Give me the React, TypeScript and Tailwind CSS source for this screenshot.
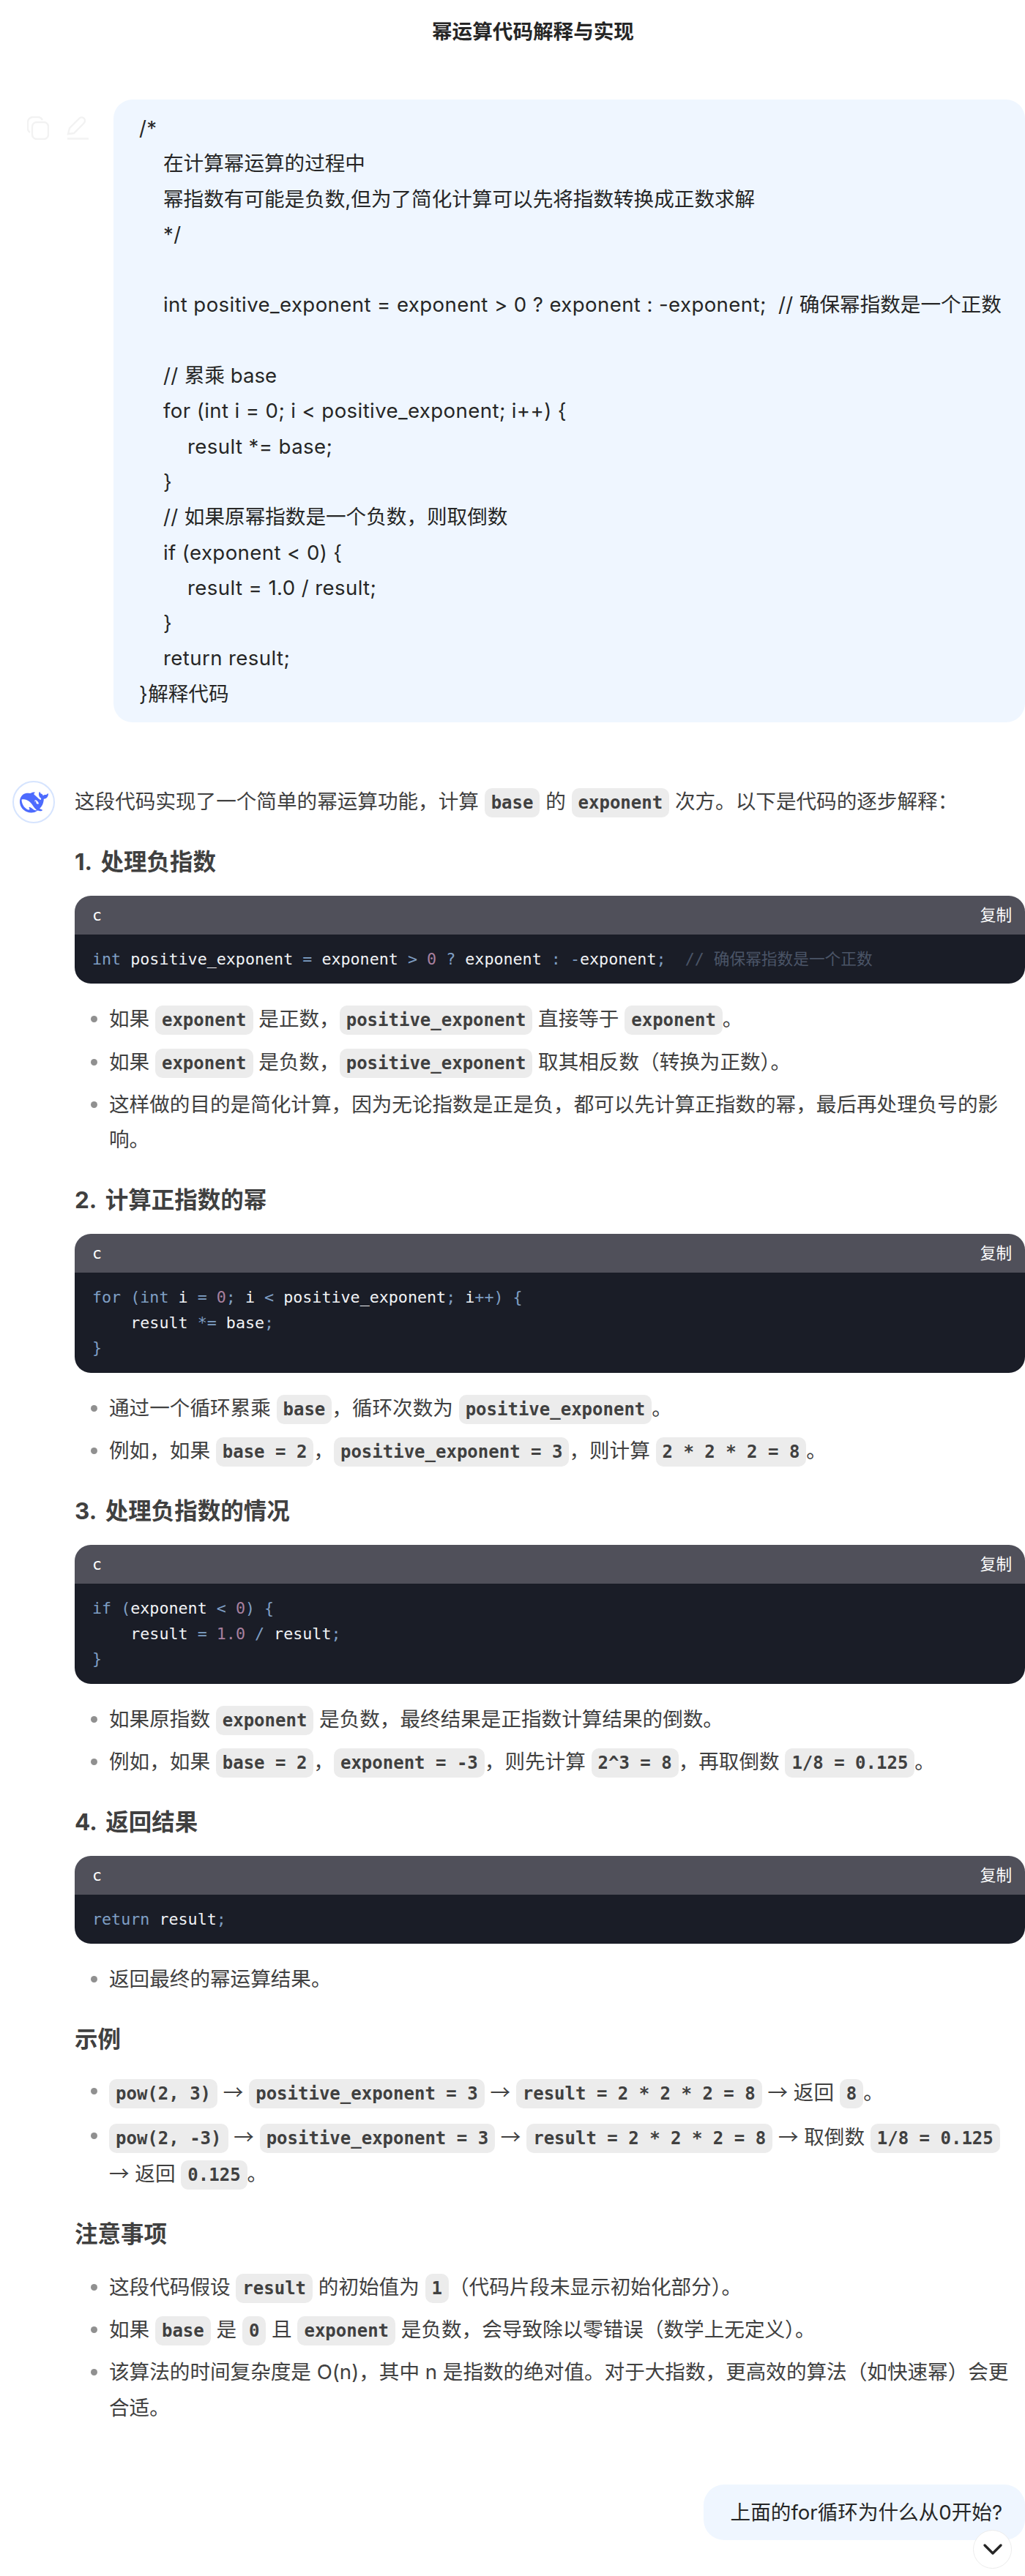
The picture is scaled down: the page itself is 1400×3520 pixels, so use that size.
import React from "react";

const SANS = "[font-family:'Inter','Noto_Sans_CJK_SC',sans-serif]";
const MONO = "[font-family:'DejaVu_Sans_Mono','Noto_Sans_CJK_SC',monospace]";

const C = ({ children }: { children: React.ReactNode }) => (
  <code className={`${MONO} whitespace-pre rounded-[10px] bg-[#ececec] px-[9px] py-[6px] text-[24px] font-bold leading-none text-[#404040]`}>
    {children}
  </code>
);
const A = () => <span className="[font-family:'Noto_Sans_CJK_SC',sans-serif]">→</span>;
const K = ({ children }: { children: React.ReactNode }) => <span className="text-[#7f9fc4]">{children}</span>;
const N = ({ children }: { children: React.ReactNode }) => <span className="text-[#a8809f]">{children}</span>;
const G = ({ children }: { children: React.ReactNode }) => <span className="text-[#4b5567]">{children}</span>;

const Code = ({ children }: { children: React.ReactNode }) => (
  <div className="rounded-[22px] overflow-hidden">
    <div className="flex h-[53px] items-center justify-between bg-[#50505a] pl-[24px] pr-[18px] text-white">
      <span className={`${MONO} text-[21.6px] leading-none`}>c</span>
      <span className={`${SANS} text-[21.6px] leading-none`}>复制</span>
    </div>
    <pre className={`${MONO} bg-[#1a1d27] pl-[24px] pt-[17px] pb-[16px] text-[21.7px] leading-[34.6px] text-[#f0f2f5]`}>{children}</pre>
  </div>
);

const H = ({ children }: { children: React.ReactNode }) => (
  <h3 className="mt-[32.5px] mb-[20px] text-[31.5px] font-bold leading-[52px] text-[#404040] [word-spacing:5px]">{children}</h3>
);

const Ul = ({ children }: { children: React.ReactNode }) => (
  <ul className="mt-[24px] flex flex-col gap-[10px]">{children}</ul>
);
const Li = ({ children }: { children: React.ReactNode }) => (
  <li className="relative pl-[47px]">
    <span className="absolute left-[22px] top-[20px] h-[9px] w-[9px] rounded-full bg-[#909090]" />
    {children}
  </li>
);

const Ln = ({ t, i = 0, rest = "" }: { t: string; i?: number; rest?: string }) => (
  <div className={`h-[48.3px] whitespace-pre ${i === 1 ? "pl-[33px]" : i === 2 ? "pl-[66px]" : ""}`}>
    <span className="tracking-[0.4px]">{t}</span>
    {rest}
  </div>
);

export default function App() {
  return (
    <div className={`${SANS} relative h-[3520px] w-[1400px] overflow-hidden bg-white text-[27.6px] leading-[48.3px] text-[#404040]`}>
      <div className="flex h-[86px] items-center justify-center pl-[56px]">
        <h1 className="text-[27.6px] font-bold leading-[48px] text-[#262626]">幂运算代码解释与实现</h1>
      </div>

      <div className="mt-[50px] flex items-start">
        <div className="flex w-[155px] items-center gap-[24px] pl-[37px] pt-[23px] text-[#f2f2f2]">
          <svg width="30" height="32" viewBox="0 0 30 32" fill="none" stroke="currentColor" strokeWidth="2.4">
            <rect x="7" y="8" width="22" height="23" rx="6" />
            <path d="M4 22c-2-1-3-3-3-5V8c0-4 3-7 7-7h7c3 0 5 2 6 4" />
          </svg>
          <svg width="31" height="32" viewBox="0 0 31 32" fill="none" stroke="currentColor" strokeWidth="2.4">
            <path d="M2 24l2-8L17 3c2-2 5-2 7 0s1 5-1 7L10 23z" />
            <path d="M1 30.500h29" />
          </svg>
        </div>
        <div className="flex-1 rounded-[26px] bg-[#eff6ff] pb-[15px] pl-[35px] pt-[15px] text-[#262626]">
          <Ln t="/*" />
          <Ln i={1} t="" rest="在计算幂运算的过程中" />
          <Ln i={1} t="" rest="幂指数有可能是负数,但为了简化计算可以先将指数转换成正数求解" />
          <Ln i={1} t="*/" />
          <Ln t="" />
          <Ln i={1} t="int positive_exponent = exponent > 0 ? exponent : -exponent;  // " rest="确保幂指数是一个正数" />
          <Ln t="" />
          <Ln i={1} t="// " rest="累乘 base" />
          <Ln i={1} t="for (int i = 0; i < positive_exponent; i++) {" />
          <Ln i={2} t="result *= base;" />
          <Ln i={1} t="}" />
          <Ln i={1} t="// " rest="如果原幂指数是一个负数，则取倒数" />
          <Ln i={1} t="if (exponent < 0) {" />
          <Ln i={2} t="result = 1.0 / result;" />
          <Ln i={1} t="}" />
          <Ln i={1} t="return result;" />
          <Ln t="}" rest="解释代码" />
        </div>
      </div>

      <div className="relative mt-[80px] pl-[102px]">
        <div className="absolute left-[17px] top-0 flex h-[58px] w-[58px] items-center justify-center rounded-full border-2 border-[#d6e4fe] bg-white">
          <svg width="39" height="39" viewBox="0 0 24 24" fill="#4d6bfe">
            <path d="M23.748 4.482c-.254-.124-.364.113-.512.234-.051.039-.094.09-.137.136-.372.397-.806.657-1.373.626-.829-.046-1.537.214-2.163.848-.133-.782-.575-1.248-1.247-1.548-.352-.156-.708-.311-.955-.65-.172-.241-.219-.51-.305-.774-.055-.16-.11-.323-.293-.35-.2-.031-.278.136-.356.276-.313.572-.434 1.202-.422 1.84.027 1.436.633 2.58 1.838 3.393.137.093.172.187.129.323-.082.28-.18.552-.266.833-.055.179-.137.217-.329.14a5.526 5.526 0 01-1.736-1.18c-.857-.828-1.631-1.742-2.597-2.458a11.365 11.365 0 00-.689-.471c-.985-.957.13-1.743.388-1.836.27-.098.093-.432-.779-.428-.872.004-1.67.295-2.687.684a3.055 3.055 0 01-.465.137 9.597 9.597 0 00-2.883-.102c-1.885.21-3.39 1.102-4.497 2.623C.082 8.606-.231 10.684.152 12.85c.403 2.284 1.569 4.175 3.36 5.653 1.858 1.533 3.997 2.284 6.438 2.14 1.482-.085 3.133-.284 4.994-1.86.47.234.962.327 1.78.397.63.059 1.236-.03 1.705-.128.735-.156.684-.837.419-.961-2.155-1.004-1.682-.595-2.113-.926 1.096-1.296 2.746-2.642 3.392-7.003.05-.347.007-.565 0-.845-.004-.17.035-.237.23-.256a4.173 4.173 0 001.545-.475c1.396-.763 1.96-2.015 2.093-3.517.02-.23-.004-.467-.247-.588zM11.581 18c-2.089-1.642-3.102-2.183-3.52-2.16-.392.024-.321.471-.235.763.09.288.207.486.371.739.114.167.192.416-.113.603-.673.416-1.842-.14-1.897-.167-1.361-.802-2.5-1.86-3.301-3.307-.774-1.393-1.224-2.887-1.298-4.482-.02-.386.093-.522.477-.592a4.696 4.696 0 011.529-.039c2.132.312 3.946 1.265 5.468 2.774.868.86 1.525 1.887 2.202 2.891.72 1.066 1.494 2.082 2.48 2.914.348.292.625.514.891.677-.802.09-2.14.11-3.054-.614zm1-6.44a.306.306 0 01.415-.287.302.302 0 01.2.288.306.306 0 01-.31.307.303.303 0 01-.304-.308zm3.11 1.596c-.2.081-.399.151-.59.16a1.245 1.245 0 01-.798-.254c-.274-.23-.47-.358-.552-.758a1.73 1.73 0 01.016-.588c.07-.327-.008-.537-.239-.727-.187-.156-.426-.199-.688-.199a.559.559 0 01-.254-.078c-.11-.054-.2-.19-.114-.358.028-.054.16-.186.192-.21.356-.202.767-.136 1.146.016.352.144.618.408 1.001.782.391.451.462.576.685.914.176.265.336.537.445.848.067.195-.019.354-.25.452z" />
          </svg>
        </div>

        <p className="pt-[4px]">这段代码实现了一个简单的幂运算功能，计算 <C>base</C> 的 <C>exponent</C> 次方。以下是代码的逐步解释：</p>

        <H>1. 处理负指数</H>
        <Code>
          <K>int</K> positive_exponent <K>=</K> exponent <K>&gt;</K> <N>0</N> <K>?</K> exponent <K>:</K> <K>-</K>exponent<K>;</K>  <G>// 确保幂指数是一个正数</G>
        </Code>
        <Ul>
          <Li>如果 <C>exponent</C> 是正数，<C>positive_exponent</C> 直接等于 <C>exponent</C>。</Li>
          <Li>如果 <C>exponent</C> 是负数，<C>positive_exponent</C> 取其相反数（转换为正数）。</Li>
          <Li>这样做的目的是简化计算，因为无论指数是正是负，都可以先计算正指数的幂，最后再处理负号的影响。</Li>
        </Ul>

        <H>2. 计算正指数的幂</H>
        <Code>
          <K>for (int</K> i <K>=</K> <N>0</N><K>;</K> i <K>&lt;</K> positive_exponent<K>;</K> i<K>++) {"{"}</K>{"\n"}
          {"    "}result <K>*=</K> base<K>;</K>{"\n"}
          <K>{"}"}</K>
        </Code>
        <Ul>
          <Li>通过一个循环累乘 <C>base</C>，循环次数为 <C>positive_exponent</C>。</Li>
          <Li>例如，如果 <C>base = 2</C>，<C>positive_exponent = 3</C>，则计算 <C>2 * 2 * 2 = 8</C>。</Li>
        </Ul>

        <H>3. 处理负指数的情况</H>
        <Code>
          <K>if (</K>exponent <K>&lt;</K> <N>0</N><K>) {"{"}</K>{"\n"}
          {"    "}result <K>=</K> <N>1.0</N> <K>/</K> result<K>;</K>{"\n"}
          <K>{"}"}</K>
        </Code>
        <Ul>
          <Li>如果原指数 <C>exponent</C> 是负数，最终结果是正指数计算结果的倒数。</Li>
          <Li>例如，如果 <C>base = 2</C>，<C>exponent = -3</C>，则先计算 <C>2^3 = 8</C>，再取倒数 <C>1/8 = 0.125</C>。</Li>
        </Ul>

        <H>4. 返回结果</H>
        <Code>
          <K>return</K> result<K>;</K>
        </Code>
        <Ul>
          <Li>返回最终的幂运算结果。</Li>
        </Ul>

        <H>示例</H>
        <ul className="flex flex-col gap-[10px]">
          <Li><C>pow(2, 3)</C> <A /> <C>positive_exponent = 3</C> <A /> <C>result = 2 * 2 * 2 = 8</C> <A /> 返回 <C>8</C>。</Li>
          <Li><C>pow(2, -3)</C> <A /> <C>positive_exponent = 3</C> <A /> <C>result = 2 * 2 * 2 = 8</C> <A /> 取倒数 <C>1/8 = 0.125</C> <span className="whitespace-nowrap"><A /> 返回 <C>0.125</C>。</span></Li>
        </ul>

        <H>注意事项</H>
        <ul className="mt-[22px] flex flex-col gap-[10px]">
          <Li>这段代码假设 <C>result</C> 的初始值为 <C>1</C>（代码片段未显示初始化部分）。</Li>
          <Li>如果 <C>base</C> 是 <C>0</C> 且 <C>exponent</C> 是负数，会导致除以零错误（数学上无定义）。</Li>
          <Li>该算法的时间复杂度是 O(n)，其中 n 是指数的绝对值。对于大指数，更高效的算法（如快速幂）会更合适。</Li>
        </ul>
      </div>

      <div className="mt-[81px] flex justify-end">
        <div className="rounded-[28px] bg-[#eff6ff] py-[14px] pl-[37px] pr-[31px] text-[#262626]">上面的for循环为什么从0开始?</div>
      </div>

      <div className="absolute left-[1329px] top-[3457px] flex h-[53px] w-[53px] items-center justify-center rounded-full border border-[#ececec] bg-white text-[#262626]">
        <svg width="28" height="18" viewBox="0 0 28 18" fill="none" stroke="currentColor" strokeWidth="3.4" strokeLinecap="round" strokeLinejoin="round">
          <path d="M3 3l11 11L25 3" />
        </svg>
      </div>
    </div>
  );
}
